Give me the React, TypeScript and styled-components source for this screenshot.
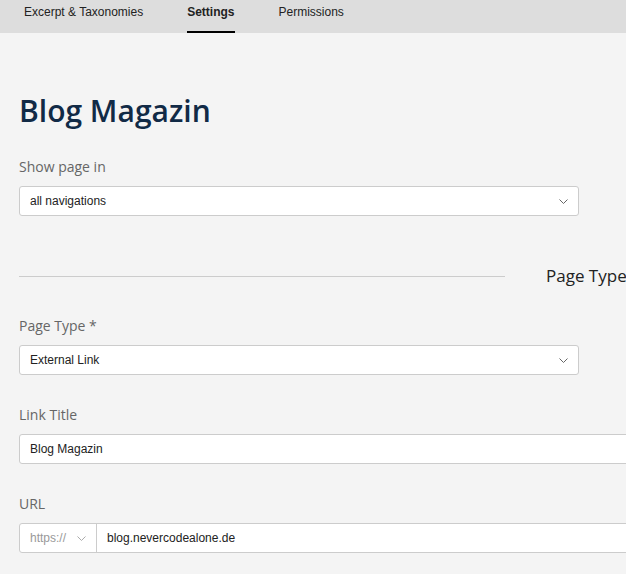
import React from "react";
import styled, { createGlobalStyle } from "styled-components";

const GlobalStyle = createGlobalStyle`
  html, body {
    margin: 0;
    padding: 0;
    background: #f4f4f4;
    overflow: hidden;
  }
  body {
    font-family: "Open Sans", "Liberation Sans", sans-serif;
  }
`;

const Page = styled.div`
  width: 1200px;
  min-height: 574px;
  background: #f4f4f4;
`;

const TabBar = styled.nav`
  display: flex;
  gap: 44px;
  height: 33px;
  padding-left: 24px;
  background: #dddddd;
`;

const Tab = styled.div<{ $active?: boolean }>`
  display: flex;
  align-items: center;
  height: 33px;
  box-sizing: border-box;
  padding-bottom: 7px;
  font-family: "Liberation Sans", Arial, sans-serif;
  font-size: 12px;
  font-weight: ${(p) => (p.$active ? 700 : 400)};
  color: #222;
  border-bottom: 2px solid ${(p) => (p.$active ? "#000" : "transparent")};
`;

const Main = styled.main`
  padding: 58px 0 0 19px;
`;

const Title = styled.h1`
  margin: 0 0 26px;
  font-size: 30px;
  line-height: 40px;
  font-weight: 600;
  color: #112a46;
`;

const Field = styled.div`
  display: flex;
  flex-direction: column;
  gap: 9px;
  margin-bottom: 30px;
`;

const Label = styled.label`
  font-size: 14px;
  line-height: 20px;
  color: #666;
`;

const Control = styled.div<{ $wide?: boolean }>`
  display: flex;
  align-items: center;
  box-sizing: border-box;
  width: ${(p) => (p.$wide ? "1100px" : "560px")};
  height: 30px;
  background: #fff;
  border: 1px solid #cccccc;
  border-radius: 3px;
  font-family: "Liberation Sans", Arial, sans-serif;
  font-size: 12px;
  color: #222;
`;

const Value = styled.span`
  flex: 1;
  padding-left: 10px;
`;

const Chevron = styled.svg<{ $light?: boolean }>`
  width: 9px;
  height: 5px;
  margin-right: 10px;
  fill: none;
  stroke: ${(p) => (p.$light ? "#aaa" : "#666")};
  stroke-width: 1;
`;

const Prefix = styled.div`
  display: flex;
  align-items: center;
  gap: 11px;
  width: 77px;
  height: 100%;
  box-sizing: border-box;
  padding-left: 10px;
  border-right: 1px solid #cccccc;
  color: #999;
`;

const Divider = styled.div`
  display: grid;
  grid-template-columns: 486px auto 1fr;
  align-items: center;
  gap: 41px;
  margin: 48px 0 28px;
`;

const Rule = styled.div`
  height: 1px;
  background: #cccccc;
`;

const SectionTitle = styled.h2`
  margin: 0;
  font-size: 17px;
  line-height: 24px;
  font-weight: 400;
  color: #222;
`;

const ChevronDown = ({ light }: { light?: boolean }) => (
  <Chevron $light={light} viewBox="0 0 9 5">
    <path d="M0.5 0.5 L4.5 4.5 L8.5 0.5" />
  </Chevron>
);

export default function App() {
  return (
    <Page>
      <GlobalStyle />
      <TabBar>
        <Tab>Excerpt &amp; Taxonomies</Tab>
        <Tab $active>Settings</Tab>
        <Tab>Permissions</Tab>
      </TabBar>

      <Main>
        <Title>Blog Magazin</Title>

        {/* navigation */}
        <Field style={{ marginBottom: 0 }}>
          <Label>Show page in</Label>
          <Control>
            <Value>all navigations</Value>
            <ChevronDown />
          </Control>
        </Field>

        <Divider>
          <Rule />
          <SectionTitle>Page Type</SectionTitle>
          <Rule />
        </Divider>

        <Field>
          <Label>Page Type *</Label>
          <Control>
            <Value>External Link</Value>
            <ChevronDown />
          </Control>
        </Field>

        <Field>
          <Label>Link Title</Label>
          <Control $wide>
            <Value>Blog Magazin</Value>
          </Control>
        </Field>

        <Field>
          <Label>URL</Label>
          <Control $wide>
            <Prefix>
              https://
              <ChevronDown light />
            </Prefix>
            <Value>blog.nevercodealone.de</Value>
          </Control>
        </Field>
      </Main>
    </Page>
  );
}
